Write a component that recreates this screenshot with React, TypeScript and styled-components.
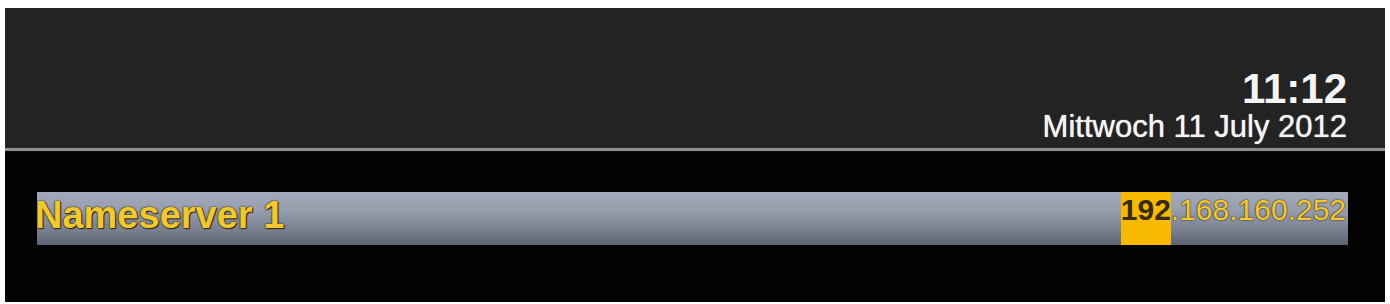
import React from 'react';
import styled, { createGlobalStyle } from 'styled-components';

const GlobalStyle = createGlobalStyle`
  html, body {
    margin: 0;
    padding: 0;
    background: #ffffff;
  }
  body {
    font-family: 'Liberation Sans', Arial, sans-serif;
  }
`;

const Screen = styled.div`
  margin: 8px 5px 2px 5px;
  width: 1380px;
  height: 294px;
  display: flex;
  flex-direction: column;
  background: #030303;
`;

const Header = styled.div`
  height: 140px;
  background: #232323;
  display: flex;
  flex-direction: column;
  justify-content: flex-end;
  align-items: flex-end;
  padding: 0 38px 6px 0;
  box-sizing: border-box;
  color: #f4f4f4;
`;

const Time = styled.div`
  font-size: 42px;
  font-weight: bold;
  line-height: 42px;
`;

const DateLine = styled.div`
  font-size: 31px;
  line-height: 31px;
  margin-top: 1px;
  text-shadow: 0 0 1px #f4f4f4;
`;

const Separator = styled.div`
  height: 3px;
  background: #8c8c8c;
  box-shadow: 0 0 1px #6a6a6a;
`;

const Content = styled.div`
  flex: 1;
  padding: 41px 37px 0 32px;
`;

const Row = styled.div`
  height: 53px;
  display: flex;
  justify-content: space-between;
  align-items: stretch;
  background: linear-gradient(#a4aabb 0%, #979dad 35%, #7a8292 70%, #5c6474 100%);
`;

const Label = styled.div`
  font-size: 38px;
  font-weight: bold;
  line-height: 46px;
  margin-left: -2px;
  color: #f0c832;
  text-shadow: 0 0 1px #3a2c00, 0 0 2px #3a2c00, 1px 1px 1px #2e2300;
`;

const Address = styled.div`
  display: flex;
  align-items: stretch;
  padding-right: 2px;
`;

const Segment = styled.span<{ $active?: boolean }>`
  font-size: 30px;
  line-height: 35px;
  font-weight: ${(p) => (p.$active ? 'bold' : 'normal')};
  color: ${(p) => (p.$active ? '#3a2a10' : '#f0c838')};
  background: ${(p) => (p.$active ? '#f7ba00' : 'transparent')};
  text-shadow: ${(p) => (p.$active ? 'none' : '0 0 1px #4a3800, 0 0 2px #3a2c00')};
`;

const segments = ['192', '.168.160.252'];

const App: React.FC = () => {
  return (
    <React.Fragment>
      <GlobalStyle />
      <Screen>
        <Header>
          <Time>11:12</Time>
          <DateLine>Mittwoch 11 July 2012</DateLine>
        </Header>
        <Separator />
        <Content>
          <Row>
            <Label>Nameserver 1</Label>
            <Address>
              {segments.map((s, i) => (
                <Segment key={i} $active={i === 0}>
                  {s}
                </Segment>
              ))}
            </Address>
          </Row>
        </Content>
      </Screen>
    </React.Fragment>
  );
};

export default App;
